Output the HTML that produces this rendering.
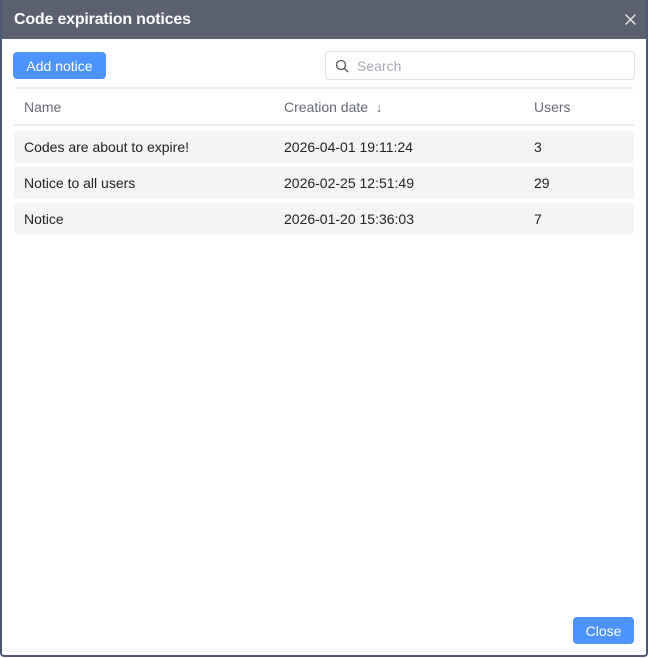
<!DOCTYPE html>
<html><head><style>
body{margin:0;width:648px;height:658px;overflow:hidden;background:#fff;font-family:"Liberation Sans",sans-serif;}
.win{position:absolute;left:0;top:0;width:644px;height:655px;border:2px solid #4c5872;border-top:0;border-radius:0 0 4px 4px;background:#fff;}
.hd{position:absolute;left:0;top:0;width:644px;height:39px;background:#5b6170;color:#fff;font-size:16px;font-weight:bold;line-height:40px;padding-left:12px;box-sizing:border-box;letter-spacing:-0.2px}
.x{position:absolute;right:10px;top:14px}
.btn{position:absolute;background:#4d94ff;color:#fff;border-radius:4px;font-size:14px;text-align:center;}
.search{position:absolute;left:323px;top:51px;width:308px;height:27px;border:1px solid #dde0e4;border-radius:4px;color:#a7abb2;font-size:14px;line-height:28px;}
.line{position:absolute;left:12px;width:620px;height:2px;background:#eceef0}
.th{position:absolute;top:99px;font-size:14px;color:#666b73}
.row{position:absolute;left:12px;width:620px;height:32px;background:#f4f4f5;border-radius:3px;font-size:14px;color:#222;line-height:32px}
.row span{position:absolute}
</style></head><body>
<div class="win">
<div class="hd">Code expiration notices<svg class="x" width="11" height="11" viewBox="0 0 11 11"><path d="M0.5 0.5L10.5 10.5M10.5 0.5L0.5 10.5" stroke="#eee" stroke-width="1.3"/></svg></div>
<div class="btn" style="left:11px;top:52px;width:93px;height:27px;line-height:28px">Add notice</div>
<div class="search"><svg style="position:absolute;left:9px;top:7px" width="14" height="14" viewBox="0 0 14 14"><circle cx="6" cy="6" r="4.5" fill="none" stroke="#555" stroke-width="1.3"/><line x1="9.3" y1="9.3" x2="13" y2="13" stroke="#555" stroke-width="1.3"/></svg><span style="position:absolute;left:31px">Search</span></div>
<div class="line" style="top:87px"></div>
<div class="th" style="left:22px">Name</div>
<div class="th" style="left:282px">Creation date &nbsp;<span style="font-size:13px">↓</span></div>
<div class="th" style="left:532px">Users</div>
<div class="line" style="top:124px"></div>
<div class="row" style="top:131px"><span style="left:10px">Codes are about to expire!</span><span style="left:270px">2026-04-01 19:11:24</span><span style="left:520px">3</span></div>
<div class="row" style="top:167px"><span style="left:10px">Notice to all users</span><span style="left:270px">2026-02-25 12:51:49</span><span style="left:520px">29</span></div>
<div class="row" style="top:203px"><span style="left:10px">Notice</span><span style="left:270px">2026-01-20 15:36:03</span><span style="left:520px">7</span></div>
<div class="btn" style="left:571px;top:617px;width:61px;height:27px;line-height:28px">Close</div>
</div>
</body></html>
